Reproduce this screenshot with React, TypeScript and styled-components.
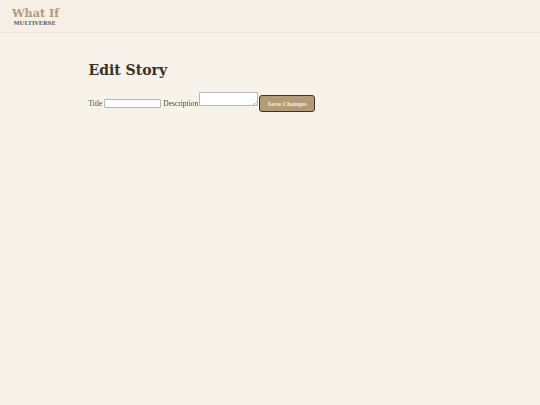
import React from "react";
import styled, { createGlobalStyle } from "styled-components";

const GlobalStyle = createGlobalStyle`
  html, body {
    margin: 0;
    padding: 0;
    background: #f7f2ea;
  }
  body {
    font-family: "Liberation Serif", serif;
    color: #3a2e26;
  }
`;

const Header = styled.header`
  height: 33px;
  box-sizing: border-box;
  padding: 7px 12px 0;
  background: #f5efe6;
  border-bottom: 1px solid #e9e3da;
`;

const Logo = styled.div`
  font-family: "DejaVu Serif", serif;
  font-size: 11.2px;
  line-height: 13px;
  font-weight: 700;
  color: #b39a74;
  opacity: 0.99;
`;

const LogoSub = styled.div`
  margin: 0 0 0 1.5px;
  font-family: "DejaVu Serif", serif;
  font-size: 5.5px;
  line-height: 6px;
  font-weight: 700;
  color: #665c50;
  opacity: 0.99;
`;

const Main = styled.main`
  padding: 27px 0 0 88.5px;
`;

const Title = styled.h1`
  margin: 0 0 12px;
  font-family: "DejaVu Serif", serif;
  font-size: 14px;
  line-height: 20px;
  font-weight: 700;
  color: #3a2e26;
  opacity: 0.99;
`;

const Form = styled.form`
  font-size: 7.5px;
  opacity: 0.99;
`;

const Label = styled.label`
  color: #4a3f36;
`;

const TextInput = styled.input`
  box-sizing: border-box;
  width: 57.5px;
  height: 9px;
  margin: 0 0 0 1.5px;
  padding: 0 1px;
  vertical-align: -2px;
  background: #fff;
  border: 1px solid #b9b5b0;
  border-radius: 1px;
`;

const TextArea = styled.textarea`
  box-sizing: border-box;
  width: 59px;
  height: 14px;
  margin: 0 0 0 1px;
  padding: 0 1px;
  resize: none;
  background: #fff
    linear-gradient(135deg, transparent 60%, #cfcbc6 60%, #cfcbc6 72%, transparent 72%, transparent 84%, #cfcbc6 84%)
    no-repeat right bottom / 5px 5px;
  border: 1px solid #b9b5b0;
  border-radius: 1px;
`;

const SaveButton = styled.button`
  box-sizing: border-box;
  width: 56px;
  height: 17px;
  margin: 0 0 0 1px;
  padding: 0;
  font-family: inherit;
  font-size: 6.6px;
  font-weight: 700;
  color: #f3ece0;
  background: #b39a74;
  border: 1px solid #3d3226;
  border-radius: 3px;
`;

export default function App() {
  return (
    <>
      <GlobalStyle />
      <Header>
        <Logo>What If</Logo>
        <LogoSub>MULTIVERSE</LogoSub>
      </Header>
      <Main>
        <Title>Edit Story</Title>
        <Form onSubmit={(e) => e.preventDefault()}>
          <Label htmlFor="title">Title</Label>
          <TextInput id="title" type="text" />{" "}
          <Label htmlFor="description">Description</Label>
          <TextArea id="description" />
          <SaveButton type="submit">Save Changes</SaveButton>
        </Form>
      </Main>
    </>
  );
}
